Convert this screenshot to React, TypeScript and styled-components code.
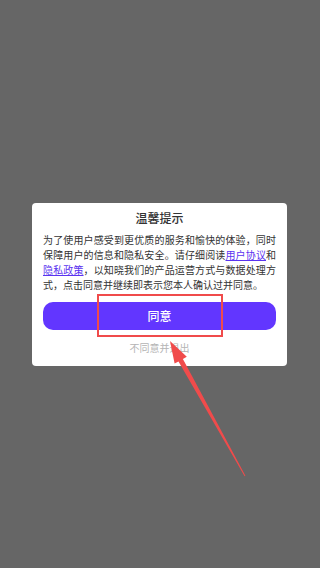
import React from "react";
import styled, { createGlobalStyle } from "styled-components";

const GlobalStyle = createGlobalStyle`
    html, body {
        margin: 0;
        padding: 0;
        background: #666666;
        font-family: "Noto Sans CJK SC", "Noto Sans", sans-serif;
    }
    #root {
        min-height: 568px;
    }
`

const Screen = styled.div`
    position: relative;
    width: 320px;
    height: 568px;
    display: flex;
    align-items: center;
    justify-content: center;
    background: #666666;
    overflow: hidden;
`

const Dialog = styled.div`
    width: 255px;
    box-sizing: border-box;
    margin-left: -1px;
    background: #ffffff;
    border-radius: 4px;
    padding: 5px 11px 11px 11px;
    display: flex;
    flex-direction: column;
`

const Title = styled.h2`
    margin: 0;
    font-size: 12px;
    font-weight: 500;
    line-height: 20px;
    color: #333333;
    text-align: center;
`

const Message = styled.p`
    margin: 4px 0 0;
    font-size: 10px;
    line-height: 15px;
    color: #333333;
    text-align: justify;
`

const Link = styled.a`
    color: #5a33f0;
    text-decoration: underline;
`

const AgreeBtn = styled.button`
    margin: 10px 0 0;
    height: 28px;
    border: none;
    border-radius: 10px;
    background: #6236ff;
    color: #ffffff;
    font-family: inherit;
    font-size: 12px;
    font-weight: 500;
    cursor: pointer;
`

const DeclineText = styled.div`
    margin-top: 11px;
    font-size: 10px;
    line-height: 14px;
    color: #b4b4b4;
    text-align: center;
`

const HighlightBox = styled.div`
    position: absolute;
    left: 97px;
    top: 294px;
    width: 126px;
    height: 43px;
    box-sizing: border-box;
    border: 2px solid #f04b4b;
    pointer-events: none;
`

const ArrowLayer = styled.svg`
    position: absolute;
    left: 0;
    top: 0;
    width: 320px;
    height: 568px;
    pointer-events: none;
`

const App: React.FC = () => {
    return (
        <>
            <GlobalStyle />
            <Screen>
                <Dialog>
                    <Title>温馨提示</Title>
                    <Message>
                        为了使用户感受到更优质的服务和愉快的体验，同时保障用户的信息和隐私安全。请仔细阅读<Link>用户协议</Link>和<Link>隐私政策</Link>，以知晓我们的产品运营方式与数据处理方式，点击同意并继续即表示您本人确认过并同意。
                    </Message>
                    <AgreeBtn>同意</AgreeBtn>
                    <DeclineText>不同意并退出</DeclineText>
                </Dialog>
                <HighlightBox />
                <ArrowLayer viewBox="0 0 320 568">
                    <polygon
                        fill="#f04b4b"
                        points="170,341 186.8,356.8 182.9,359 245.4,475.8 244.6,476.2 178.5,361.4 174.6,363.6"
                    />
                </ArrowLayer>
            </Screen>
        </>
    )
}

export default App;
